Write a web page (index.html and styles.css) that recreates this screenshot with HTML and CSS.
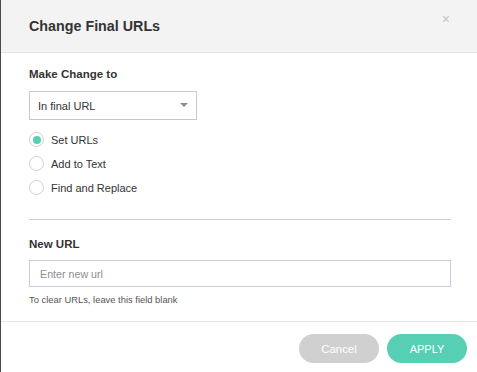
FILE: index.html
```html
<!DOCTYPE html>
<html>
<head>
<meta charset="utf-8">
<link rel="stylesheet" href="styles.css">
</head>
<body>
<div class="page">
  <div class="backdrop"></div>
  <div class="modal">
    <div class="modal-header">
      <h2 class="modal-title">Change Final URLs</h2>
      <span class="close">&#215;</span>
    </div>
    <div class="modal-body">
      <div class="label">Make Change to</div>
      <div class="select">
        <span>In final URL</span>
        <span class="caret"></span>
      </div>
      <div class="radios">
        <div class="radio-row"><span class="radio checked"></span><span>Set URLs</span></div>
        <div class="radio-row"><span class="radio"></span><span>Add to Text</span></div>
        <div class="radio-row"><span class="radio"></span><span>Find and Replace</span></div>
      </div>
      <div class="divider"></div>
      <div class="label label-url">New URL</div>
      <div class="input"><span class="placeholder">Enter new url</span></div>
      <div class="help">To clear URLs, leave this field blank</div>
    </div>
    <div class="modal-footer">
      <button class="btn btn-cancel">Cancel</button>
      <button class="btn btn-apply">APPLY</button>
    </div>
  </div>
</div>
</body>
</html>
```
FILE: styles.css
```css
html, body {
  margin: 0;
  padding: 0;
  width: 477px;
  height: 372px;
  overflow: hidden;
  font-family: "Liberation Sans", Arial, sans-serif;
  color: #333;
}
.page {
  display: flex;
  width: 477px;
  height: 372px;
}
.backdrop {
  width: 1px;
  flex: none;
  background: #4a4a4a;
}
.modal {
  flex: 1;
  display: flex;
  flex-direction: column;
  background: #fff;
}
.modal-header {
  height: 53px;
  box-sizing: border-box;
  background: #f3f3f3;
  border-bottom: 1px solid #e6e6e6;
  display: flex;
  align-items: center;
  justify-content: space-between;
  padding: 0 27px 0 28px;
}
.modal-title {
  margin: 0;
  font-size: 14.3px;
  font-weight: bold;
  color: #333;
}
.close {
  font-size: 14px;
  color: #c4c4c4;
  align-self: flex-start;
  margin-top: 11px;
}
.modal-body {
  padding: 14px 25px 0 28px;
  height: 269px;
  box-sizing: border-box;
  border-bottom: 1px solid #e6e6e6;
}
.label {
  font-size: 11.5px;
  font-weight: bold;
  color: #333;
  line-height: 15px;
}
.select {
  margin-top: 9px;
  width: 168px;
  height: 29px;
  box-sizing: border-box;
  border: 1px solid #c9c9c9;
  display: flex;
  align-items: center;
  justify-content: space-between;
  padding: 0 8px 0 8px;
  font-size: 11px;
  color: #333;
}
.caret {
  width: 0;
  height: 0;
  border-left: 4.5px solid transparent;
  border-right: 4.5px solid transparent;
  border-top: 4.5px solid #8c8c8c;
  margin-top: -1px;
}
.radios {
  margin-top: 12px;
  display: flex;
  flex-direction: column;
  gap: 9px;
}
.radio-row {
  display: flex;
  align-items: center;
  gap: 7px;
  font-size: 11px;
  color: #333;
  height: 15px;
}
.radio {
  width: 15px;
  height: 15px;
  box-sizing: border-box;
  border: 1px solid #cfcfcf;
  border-radius: 50%;
  display: flex;
  align-items: center;
  justify-content: center;
  background: #fff;
}
.radio.checked::after {
  content: "";
  width: 8px;
  height: 8px;
  border-radius: 50%;
  background: #57cfb5;
}
.divider {
  margin-top: 24px;
  height: 1px;
  background: #c8ccd4;
  width: 422px;
}
.label-url {
  margin-top: 17px;
}
.input {
  margin-top: 8px;
  width: 422px;
  height: 27px;
  box-sizing: border-box;
  border: 1px solid #c8ccd6;
  display: flex;
  align-items: center;
  padding-left: 10px;
}
.placeholder {
  font-size: 10.7px;
  color: #8d8d8d;
}
.help {
  margin-top: 7px;
  font-size: 9.4px;
  color: #555;
}
.modal-footer {
  display: flex;
  justify-content: flex-end;
  gap: 8px;
  padding: 12px 10px 0 0;
}
.btn {
  width: 80px;
  height: 29px;
  border: none;
  border-radius: 15px;
  font-family: "Liberation Sans", Arial, sans-serif;
  font-size: 11.4px;
  color: #fff;
  padding: 0;
}
.btn-cancel {
  background: #d0d0d0;
}
.btn-apply {
  background: #57cfb5;
  font-size: 11px;
}
```
